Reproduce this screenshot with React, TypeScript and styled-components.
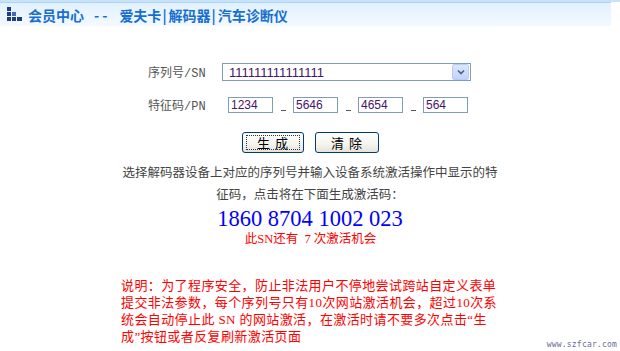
import styled, { createGlobalStyle } from 'styled-components';

const GlobalStyle = createGlobalStyle`
  html, body {
    margin: 0;
    padding: 0;
    background: #ffffff;
  }
  body {
    font-family: "Noto Sans CJK SC", sans-serif;
  }
`;

const Page = styled.div`
  position: relative;
  width: 620px;
  height: 351px;
  overflow: hidden;
  background: #ffffff;
`;

const TopBar = styled.div`
  border-top: 2px solid #c6e3fb;
`;

const TitleBand = styled.div`
  display: flex;
  align-items: center;
  gap: 5px;
  width: 611px;
  height: 24px;
  padding-left: 7px;
  box-sizing: border-box;
  border-top: 1px solid #acd5f6;
  background: linear-gradient(#e2f1fe, #eef7ff 70%, #f3f9ff);
`;

const Title = styled.span`
  display: flex;
  align-items: center;
  font-size: 14px;
  font-weight: 700;
  color: #166fd0;
  line-height: 24px;
`;

const TitleDash = styled.span`
  margin: 0 9px 0 10px;
  letter-spacing: 3px;
`;

const Pipe = styled.span`
  margin: 0 2px 0 1px;
`;

const Form = styled.div`
  display: flex;
  flex-direction: column;
  padding-left: 148px;
  margin-top: 37px;
`;

const FieldRow = styled.div<{ $gap: number }>`
  display: flex;
  align-items: center;
  margin-bottom: ${({ $gap }) => $gap}px;
`;

const Label = styled.span<{ $width: number }>`
  width: ${({ $width }) => $width}px;
  font-family: "Liberation Mono", "Noto Sans CJK SC", monospace;
  font-size: 12px;
  color: #555555;
`;

const SelectBox = styled.div`
  display: flex;
  align-items: center;
  justify-content: space-between;
  width: 249px;
  height: 18px;
  box-sizing: border-box;
  border: 1px solid #7f9db9;
  padding: 0 1px 0 6px;
  font-family: "Liberation Sans", Arial, sans-serif;
  font-size: 13px;
  color: #46166a;
`;

const DropButton = styled.div`
  display: flex;
  align-items: center;
  justify-content: center;
  width: 15px;
  height: 14px;
  border: 1px solid #bccbf0;
  border-radius: 2px;
  background: linear-gradient(#dbe6fd, #c2d3fa);
`;

const CodeInput = styled.div`
  width: 45px;
  height: 16px;
  box-sizing: border-box;
  border: 1px solid #7f9db9;
  padding-left: 2px;
  font-family: "Liberation Sans", Arial, sans-serif;
  font-size: 12px;
  line-height: 14px;
  color: #46166a;
`;

const Dash = styled.span`
  display: flex;
  justify-content: center;
  align-self: flex-end;
  width: 20px;
  margin-bottom: 3px;
  &::before {
    content: '';
    width: 5px;
    height: 1px;
    background: #555555;
  }
`;

const ButtonRow = styled.div`
  display: flex;
  justify-content: center;
  gap: 11px;
  margin-top: 18px;
`;

const XpButton = styled.button<{ $focused?: boolean; $width: number }>`
  position: relative;
  width: ${({ $width }) => $width}px;
  height: 21px;
  padding: 0;
  border: 1px solid #003c74;
  border-radius: 3px;
  background: linear-gradient(#ffffff, #f4f3ee 60%, #e5e2d8);
  font-family: "Noto Sans CJK SC", sans-serif;
  font-size: 13px;
  letter-spacing: 5px;
  text-indent: 5px;
  color: #000000;
  line-height: 19px;
  &::after {
    content: '';
    position: absolute;
    inset: 2px 3px;
    border: 1px dotted #333333;
    display: ${({ $focused }) => ($focused ? 'block' : 'none')};
  }
`;

const Hint = styled.p`
  width: 380px;
  margin: 8px auto 0;
  font-size: 12.5px;
  line-height: 22px;
  color: #444444;
  text-align: center;
`;

const ActivationCode = styled.div`
  margin-top: 2px;
  font-family: "Liberation Serif", "Times New Roman", serif;
  font-size: 22.5px;
  line-height: 24px;
  color: #0000ff;
  text-align: center;
`;

const Remaining = styled.div`
  font-family: "Liberation Serif", "Noto Sans CJK SC", serif;
  font-size: 12.5px;
  line-height: 16px;
  color: #ff0000;
  text-align: center;
  padding-left: 1px;
`;

const Note = styled.p`
  width: 382px;
  margin: 30px 0 0 121px;
  font-family: "Liberation Serif", "Noto Sans CJK SC", serif;
  font-size: 13px;
  letter-spacing: 0.4px;
  line-height: 17px;
  color: #ff0000;
`;

const Watermark = styled.span`
  position: absolute;
  right: 3px;
  bottom: 2px;
  font-family: "DejaVu Sans Mono", monospace;
  font-size: 8px;
  letter-spacing: 0.2px;
  color: #6a6a96;
`;

function Logo() {
  return (
    <svg width="16" height="15" viewBox="0 0 16 15" aria-hidden>
      <rect x="0" y="0" width="4" height="4" fill="#1d3d8c" />
      <rect x="0" y="5" width="4" height="4" fill="#1d3d8c" />
      <rect x="5" y="5" width="4" height="4" fill="#4669b9" />
      <rect x="0" y="10" width="4" height="4" fill="#1d3d8c" />
      <rect x="5" y="10" width="4" height="4" fill="#1d3d8c" />
      <rect x="10" y="10" width="5" height="4" fill="#1d3d8c" />
    </svg>
  );
}

function Chevron() {
  return (
    <svg width="8" height="6" viewBox="0 0 8 6" aria-hidden>
      <path d="M1 1.5 L4 4.5 L7 1.5" fill="none" stroke="#4d6185" strokeWidth="1.6" />
    </svg>
  );
}

export default function App() {
  const codes = ['1234', '5646', '4654', '564'];

  return (
    <Page>
      <GlobalStyle />
      <TopBar>
        <TitleBand>
          <Logo />
          <Title>
            会员中心<TitleDash>--</TitleDash>爱夫卡<Pipe>|</Pipe>解码器<Pipe>|</Pipe>汽车诊断仪
          </Title>
        </TitleBand>
      </TopBar>

      <Form>
        <FieldRow $gap={15}>
          <Label $width={74}>序列号/SN</Label>
          <SelectBox>
            <span>111111111111111</span>
            <DropButton>
              <Chevron />
            </DropButton>
          </SelectBox>
        </FieldRow>
        <FieldRow $gap={0}>
          <Label $width={80}>特征码/PN</Label>
          {codes.map((code, i) => (
            <span key={i} style={{ display: 'contents' }}>
              {i > 0 && <Dash />}
              <CodeInput>{code}</CodeInput>
            </span>
          ))}
        </FieldRow>
      </Form>

      <ButtonRow>
        <XpButton type="button" $focused $width={62}>
          生成
        </XpButton>
        <XpButton type="button" $width={64}>
          清除
        </XpButton>
      </ButtonRow>

      <Hint>选择解码器设备上对应的序列号并输入设备系统激活操作中显示的特征码，点击将在下面生成激活码：</Hint>
      <ActivationCode>1860 8704 1002 023</ActivationCode>
      <Remaining>此SN还有&nbsp;&nbsp;7 次激活机会</Remaining>

      <Note>
        说明：为了程序安全，防止非法用户不停地尝试跨站自定义表单提交非法参数，每个序列号只有10次网站激活机会，超过10次系统会自动停止此&nbsp;SN&nbsp;的网站激活，在激活时请不要多次点击“生成”按钮或者反复刷新激活页面
      </Note>

      <Watermark>www.szfcar.com</Watermark>
    </Page>
  );
}
